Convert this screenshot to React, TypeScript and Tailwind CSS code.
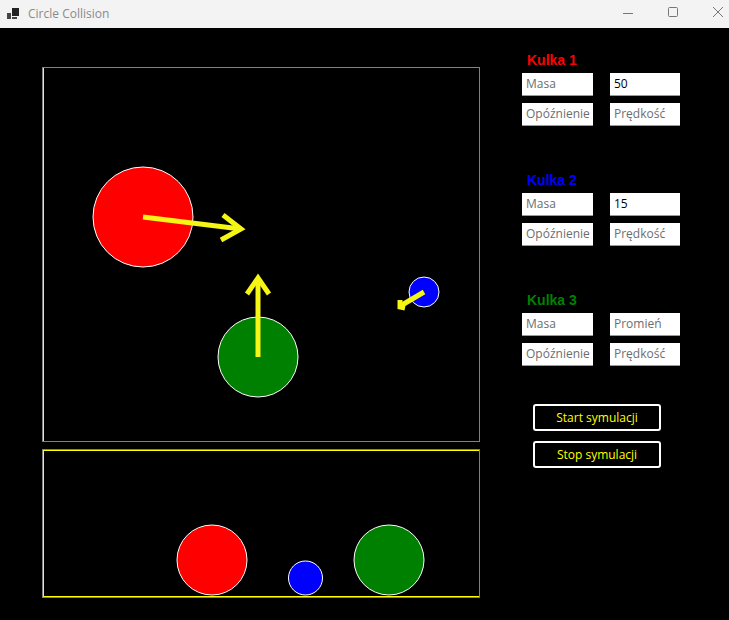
import React from "react";

const inputFont = { fontFamily: '"Open Sans", "Noto Sans", sans-serif' };

function Field({ text, value }: { text: string; value?: boolean }) {
  return (
    <div
      className={`h-[23px] bg-white border-b border-[#9a9a9a] flex items-center pl-[4px] text-[12px] ${value ? "text-black" : "text-[#6d6d6d]"}`}
      style={inputFont}
    >
      {text}
    </div>
  );
}

function Group({ title, color, a, b, c, d, bValue }: { title: string; color: string; a: string; b: string; c: string; d: string; bValue?: boolean }) {
  return (
    <div className="flex flex-col">
      <div className={`h-[20px] pl-[5px] flex items-center text-[14px] font-bold ${color}`} style={{ fontFamily: '"Liberation Sans", Arial, sans-serif' }}>
        {title}
      </div>
      <div className="mt-[3px] grid grid-cols-[71px_70px] gap-x-[17px] gap-y-[7px]">
        <Field text={a} />
        <Field text={b} value={bValue} />
        <Field text={c} />
        <Field text={d} />
      </div>
    </div>
  );
}

function Btn({ label }: { label: string }) {
  return (
    <div
      className="w-[128px] h-[27px] border-2 border-white rounded-[3px] bg-black flex items-center justify-center text-[12px] text-[#ffff00]"
      style={inputFont}
    >
      {label}
    </div>
  );
}

export default function App() {
  return (
    <div className="w-[729px] h-[620px] bg-black flex flex-col overflow-hidden">
      {/* title bar */}
      <div className="h-[28px] bg-[#f3f3f3] flex items-center shrink-0">
        <svg width="12" height="12" viewBox="0 0 12 12" className="ml-[7px]">
          <rect x="0" y="5" width="4" height="6" fill="#444" />
          <rect x="5" y="0" width="7" height="8" fill="#222" />
          <rect x="5" y="9" width="5" height="2" fill="#444" />
        </svg>
        <span className="ml-[9px] text-[12px] text-[#8a8a8a]" style={{ fontFamily: '"Open Sans", "Noto Sans", sans-serif' }}>
          Circle Collision
        </span>
        <svg width="120" height="28" viewBox="0 0 120 28" className="ml-auto">
          <line x1="14" y1="13.5" x2="24" y2="13.5" stroke="#777" strokeWidth="1" />
          <rect x="59.5" y="7.5" width="9" height="9" fill="none" stroke="#777" strokeWidth="1" rx="1" />
          <line x1="104" y1="7" x2="114" y2="17" stroke="#777" strokeWidth="1" />
          <line x1="114" y1="7" x2="104" y2="17" stroke="#777" strokeWidth="1" />
        </svg>
      </div>

      <div className="flex flex-row">
        {/* left: simulation panels */}
        <div className="pl-[42px] pt-[39px] flex flex-col gap-[7px]">
          <div className="w-[438px] h-[375px] border border-[#808080]">
            <div className="w-full h-full border-l border-[#ffff00]">
              <svg width="435" height="373" viewBox="44 68 435 373" className="block">
                <circle cx="143" cy="217" r="50" fill="#ff0000" stroke="#fff" strokeWidth="1" />
                <circle cx="258" cy="357" r="40" fill="#008000" stroke="#fff" strokeWidth="1" />
                <circle cx="424" cy="292" r="15" fill="#0000ff" stroke="#fff" strokeWidth="1" />
                <g stroke="#f5f516" strokeWidth="5" fill="none">
                  <line x1="143" y1="217" x2="241" y2="229" />
                  <polyline points="223,215 241,229 221,240" />
                  <line x1="258" y1="357" x2="258" y2="280" />
                  <polyline points="247,294 258,278 269,294" />
                  <line x1="424" y1="292" x2="402" y2="305" />
                  <polyline points="400,300 400,307 405,308" />
                </g>
              </svg>
            </div>
          </div>
          <div className="w-[438px] h-[149px] border border-[#808080]">
            <div className="w-full h-full border-l border-t border-b border-[#ffff00]">
              <svg width="435" height="145" viewBox="44 451 435 145" className="block">
                <circle cx="212" cy="560" r="35" fill="#ff0000" stroke="#fff" strokeWidth="1" />
                <circle cx="305.5" cy="578" r="17" fill="#0000ff" stroke="#fff" strokeWidth="1" />
                <circle cx="389" cy="560" r="35" fill="#008000" stroke="#fff" strokeWidth="1" />
              </svg>
            </div>
          </div>
        </div>

        {/* right: controls */}
        <div className="ml-[42px] pt-[22px] flex flex-col">
          <div className="flex flex-col gap-[44px]">
            <Group title="Kulka 1" color="text-[#ff0000]" a="Masa" b="50" bValue c="Opóźnienie" d="Prędkość" />
            <Group title="Kulka 2" color="text-[#0000ff]" a="Masa" b="15" bValue c="Opóźnienie" d="Prędkość" />
            <Group title="Kulka 3" color="text-[#008000]" a="Masa" b="Promień" c="Opóźnienie" d="Prędkość" />
          </div>
          <div className="mt-[38px] ml-[11px] flex flex-col gap-[10px]">
            <Btn label="Start symulacji" />
            <Btn label="Stop symulacji" />
          </div>
        </div>
      </div>
    </div>
  );
}
